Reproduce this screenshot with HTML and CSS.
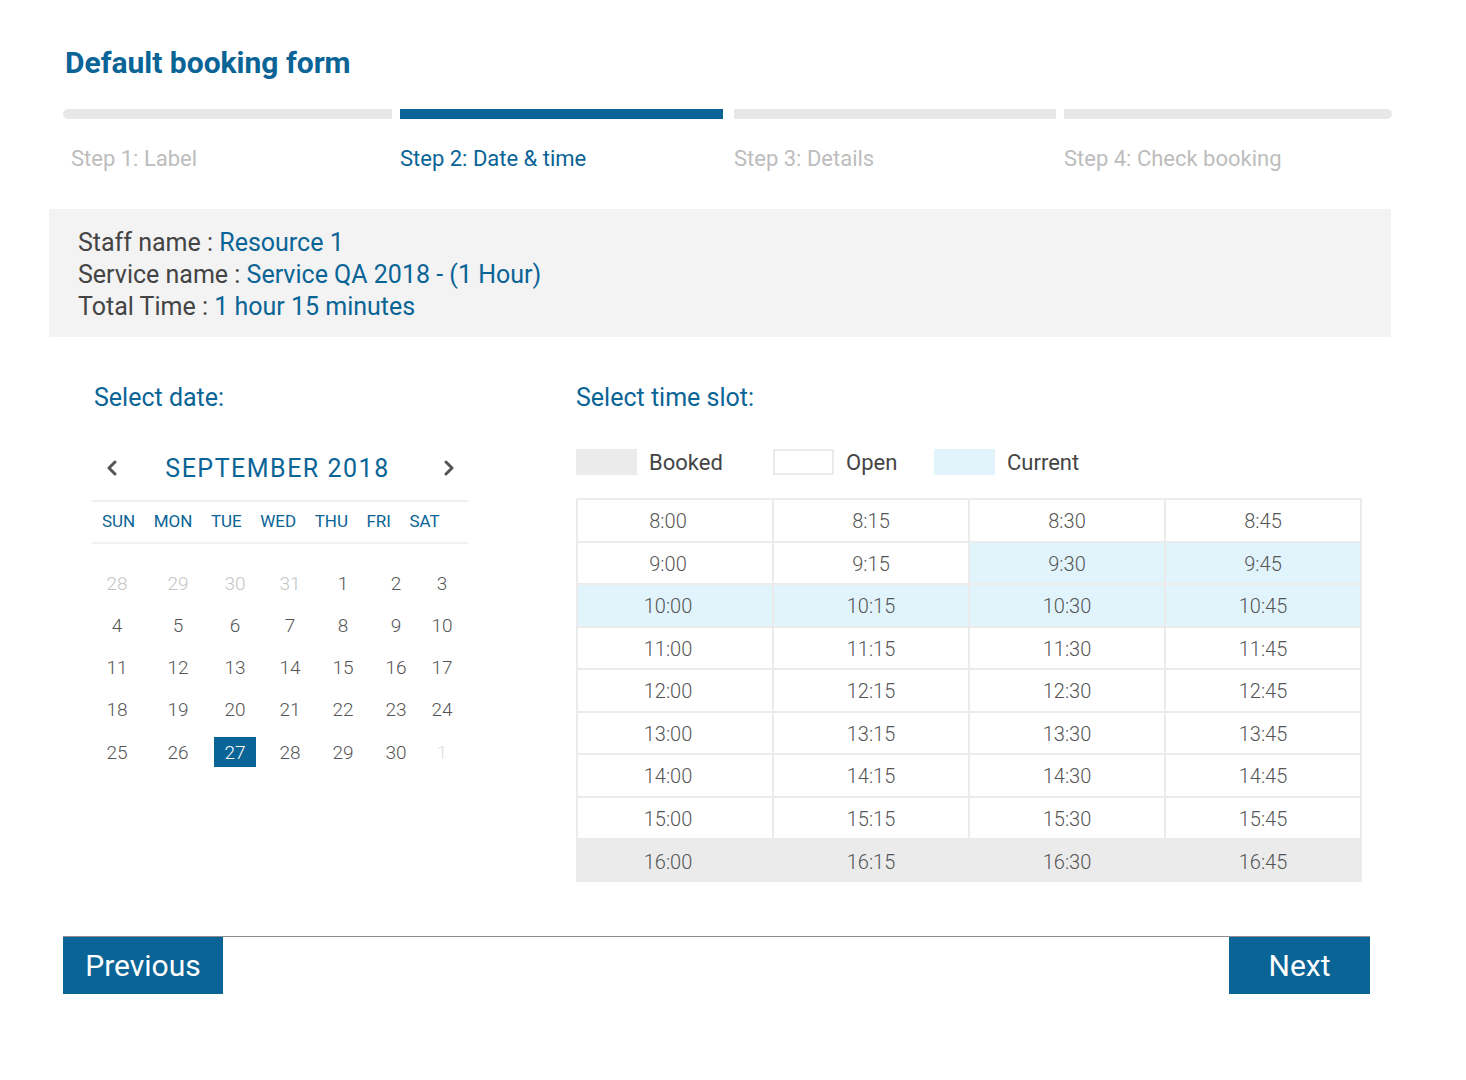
FILE: index.html
```html
<!DOCTYPE html>
<html lang="en">
<head>
<meta charset="utf-8">
<title>Default booking form</title>
<link rel="stylesheet" href="styles.css">
</head>
<body>
<div class="page">
  <h1 class="title">Default booking form</h1>

  <div class="steps">
    <div class="step step-1"><div class="bar"></div><div class="step-label">Step 1: Label</div></div>
    <div class="step step-2 active"><div class="bar"></div><div class="step-label">Step 2: Date &amp; time</div></div>
    <div class="step step-3"><div class="bar"></div><div class="step-label">Step 3: Details</div></div>
    <div class="step step-4"><div class="bar"></div><div class="step-label">Step 4: Check booking</div></div>
  </div>

  <div class="info">
    <div class="info-line">Staff name : <span class="val">Resource 1</span></div>
    <div class="info-line">Service name : <span class="val">Service QA 2018 - (1 Hour)</span></div>
    <div class="info-line">Total Time : <span class="val">1 hour 15 minutes</span></div>
  </div>

  <div class="main">
    <section class="date-col">
      <h2 class="section-title date-title">Select date:</h2>
      <div class="calendar">
        <div class="cal-head">
          <svg class="chev" width="12" height="16" viewBox="0 0 12 16"><polyline points="9,2 3,8 9,14" fill="none" stroke="#555" stroke-width="3" stroke-linecap="round" stroke-linejoin="round"/></svg>
          <div class="month">SEPTEMBER 2018</div>
          <svg class="chev" width="12" height="16" viewBox="0 0 12 16"><polyline points="3,2 9,8 3,14" fill="none" stroke="#555" stroke-width="3" stroke-linecap="round" stroke-linejoin="round"/></svg>
        </div>
        <div class="dow">
          <span>SUN</span><span>MON</span><span>TUE</span><span>WED</span><span>THU</span><span>FRI</span><span>SAT</span>
        </div>
        <div class="days">
          <span class="muted">28</span><span class="muted">29</span><span class="muted">30</span><span class="muted">31</span><span>1</span><span>2</span><span>3</span>
          <span>4</span><span>5</span><span>6</span><span>7</span><span>8</span><span>9</span><span>10</span>
          <span>11</span><span>12</span><span>13</span><span>14</span><span>15</span><span>16</span><span>17</span>
          <span>18</span><span>19</span><span>20</span><span>21</span><span>22</span><span>23</span><span>24</span>
          <span>25</span><span>26</span><span class="selected">27</span><span>28</span><span>29</span><span>30</span><span class="faint">1</span>
        </div>
      </div>
    </section>

    <section class="time-col">
      <h2 class="section-title">Select time slot:</h2>
      <div class="legend">
        <div class="legend-item item-booked"><span class="swatch sw-booked"></span>Booked</div>
        <div class="legend-item item-open"><span class="swatch sw-open"></span>Open</div>
        <div class="legend-item"><span class="swatch sw-current"></span>Current</div>
      </div>
      <div class="slots">
        <div class="slot">8:00</div><div class="slot">8:15</div><div class="slot">8:30</div><div class="slot">8:45</div>
        <div class="slot">9:00</div><div class="slot">9:15</div><div class="slot current">9:30</div><div class="slot current">9:45</div>
        <div class="slot current">10:00</div><div class="slot current">10:15</div><div class="slot current">10:30</div><div class="slot current">10:45</div>
        <div class="slot">11:00</div><div class="slot">11:15</div><div class="slot">11:30</div><div class="slot">11:45</div>
        <div class="slot">12:00</div><div class="slot">12:15</div><div class="slot">12:30</div><div class="slot">12:45</div>
        <div class="slot">13:00</div><div class="slot">13:15</div><div class="slot">13:30</div><div class="slot">13:45</div>
        <div class="slot">14:00</div><div class="slot">14:15</div><div class="slot">14:30</div><div class="slot">14:45</div>
        <div class="slot">15:00</div><div class="slot">15:15</div><div class="slot">15:30</div><div class="slot">15:45</div>
        <div class="slot booked">16:00</div><div class="slot booked">16:15</div><div class="slot booked">16:30</div><div class="slot booked">16:45</div>
      </div>
    </section>
  </div>

  <div class="footer">
    <button class="btn btn-prev">Previous</button>
    <button class="btn btn-next">Next</button>
  </div>
</div>
</body>
</html>
```
FILE: styles.css
```css
* { box-sizing: border-box; }

html, body {
  margin: 0;
  padding: 0;
  background: #ffffff;
}

body {
  font-family: Roboto, "Noto Sans", "Liberation Sans", sans-serif;
  color: #444444;
}

.page {
  width: 1466px;
  padding: 45px 75px 60px 49px;
}

.title {
  margin: 0 0 0 16px;
  font-size: 30px;
  line-height: 36px;
  font-weight: 700;
  color: #0a6496;
}

/* progress steps */
.steps {
  display: grid;
  grid-template-columns: 337px 334px 330px 328px;
  margin: 28px 0 0 14px;
}

.bar {
  height: 10px;
  background: #e8e8e8;
  margin-right: 8px;
}

.step-1 .bar { border-radius: 5px 0 0 5px; }
.step-2 .bar { margin-right: 11px; }
.step-4 .bar { margin-right: 0; border-radius: 0 5px 5px 0; }

.step.active .bar { background: #0a6496; }

.step-label {
  margin-top: 27px;
  font-size: 22px;
  line-height: 26px;
  color: #bdbdbd;
}

.step-1 .step-label { padding-left: 8px; }
.step.active .step-label { color: #0a6496; }

/* info box */
.info {
  margin-top: 37px;
  background: #f3f3f3;
  height: 128px;
  padding: 18px 29px 0;
}

.info-line {
  font-size: 25px;
  line-height: 32px;
  color: #444444;
}

.val { color: #0a6496; }

/* main */
.main {
  display: flex;
  align-items: flex-start;
  margin-top: 46px;
}

.section-title {
  margin: 0;
  font-size: 25px;
  line-height: 30px;
  font-weight: 400;
  color: #0a6496;
}

.date-col {
  width: 376px;
  margin-left: 43px;
}

.date-title { padding-left: 2px; }

.calendar { margin-top: 35px; }

.cal-head {
  display: flex;
  align-items: center;
  justify-content: space-between;
  height: 40px;
  padding: 0 13px 0 14px;
}

.chev { display: block; }

.month {
  font-size: 25px;
  letter-spacing: 1.5px;
  color: #0a6496;
  margin-right: 6px;
}

.dow {
  display: flex;
  gap: 18.5px;
  height: 44px;
  align-items: center;
  padding: 0 0 2px 10px;
  margin-top: 12px;
  border-top: 2px solid #eeeeee;
  border-bottom: 2px solid #f1f1f1;
  font-size: 17px;
  color: #0a6496;
}

.days {
  display: grid;
  grid-template-columns: 50px 72px 42px 68px 38px 68px 24px;
  grid-auto-rows: 30px;
  row-gap: 12.25px;
  margin-top: 24px;
  font-size: 19px;
  font-weight: 300;
  color: #555555;
}

.days span {
  display: flex;
  align-items: center;
  justify-content: center;
}

.days .muted { color: #c4c4c4; }
.days .faint { color: #dedede; }

.days .selected {
  background: #0a6496;
  color: #ffffff;
}

/* time slots */
.time-col {
  width: 786px;
  margin-left: 108px;
}

.legend {
  display: flex;
  align-items: center;
  margin-top: 36px;
  height: 26px;
  font-size: 22px;
  color: #444444;
}

.legend-item {
  display: flex;
  align-items: center;
}

.item-booked { width: 197px; }
.item-open { width: 161px; }

.swatch {
  width: 61px;
  height: 26px;
  margin-right: 12px;
}

.sw-booked { background: #ebebeb; }
.sw-open { background: #ffffff; border: 2px solid #ebebeb; }
.sw-current { background: #e1f4fc; }

.slots {
  display: grid;
  grid-template-columns: repeat(4, 1fr);
  grid-template-rows: repeat(8, 40.5px) 42px;
  gap: 2px;
  padding: 2px 2px 0;
  margin-top: 23px;
  background: #ebebeb;
}

.slot {
  display: flex;
  align-items: center;
  justify-content: center;
  padding-top: 2px;
  background: #ffffff;
  font-size: 20px;
  font-weight: 300;
  color: #555555;
}

.slot:nth-child(4n+1) { padding-right: 14px; }

.slot.current { background: #e1f4fc; }
.slot.booked { background: #ebebeb; }

/* footer */
.footer {
  display: flex;
  justify-content: space-between;
  align-items: flex-start;
  margin: 54px 21px 0 14px;
  border-top: 1px solid #8d8d8d;
}

.btn {
  height: 57px;
  border: 0;
  padding: 0;
  background: #0a6496;
  color: #ffffff;
  font-family: Roboto, "Noto Sans", "Liberation Sans", sans-serif;
  font-size: 30px;
  font-weight: 400;
  cursor: pointer;
}

.btn-prev { width: 160px; }
.btn-next { width: 141px; }
```
